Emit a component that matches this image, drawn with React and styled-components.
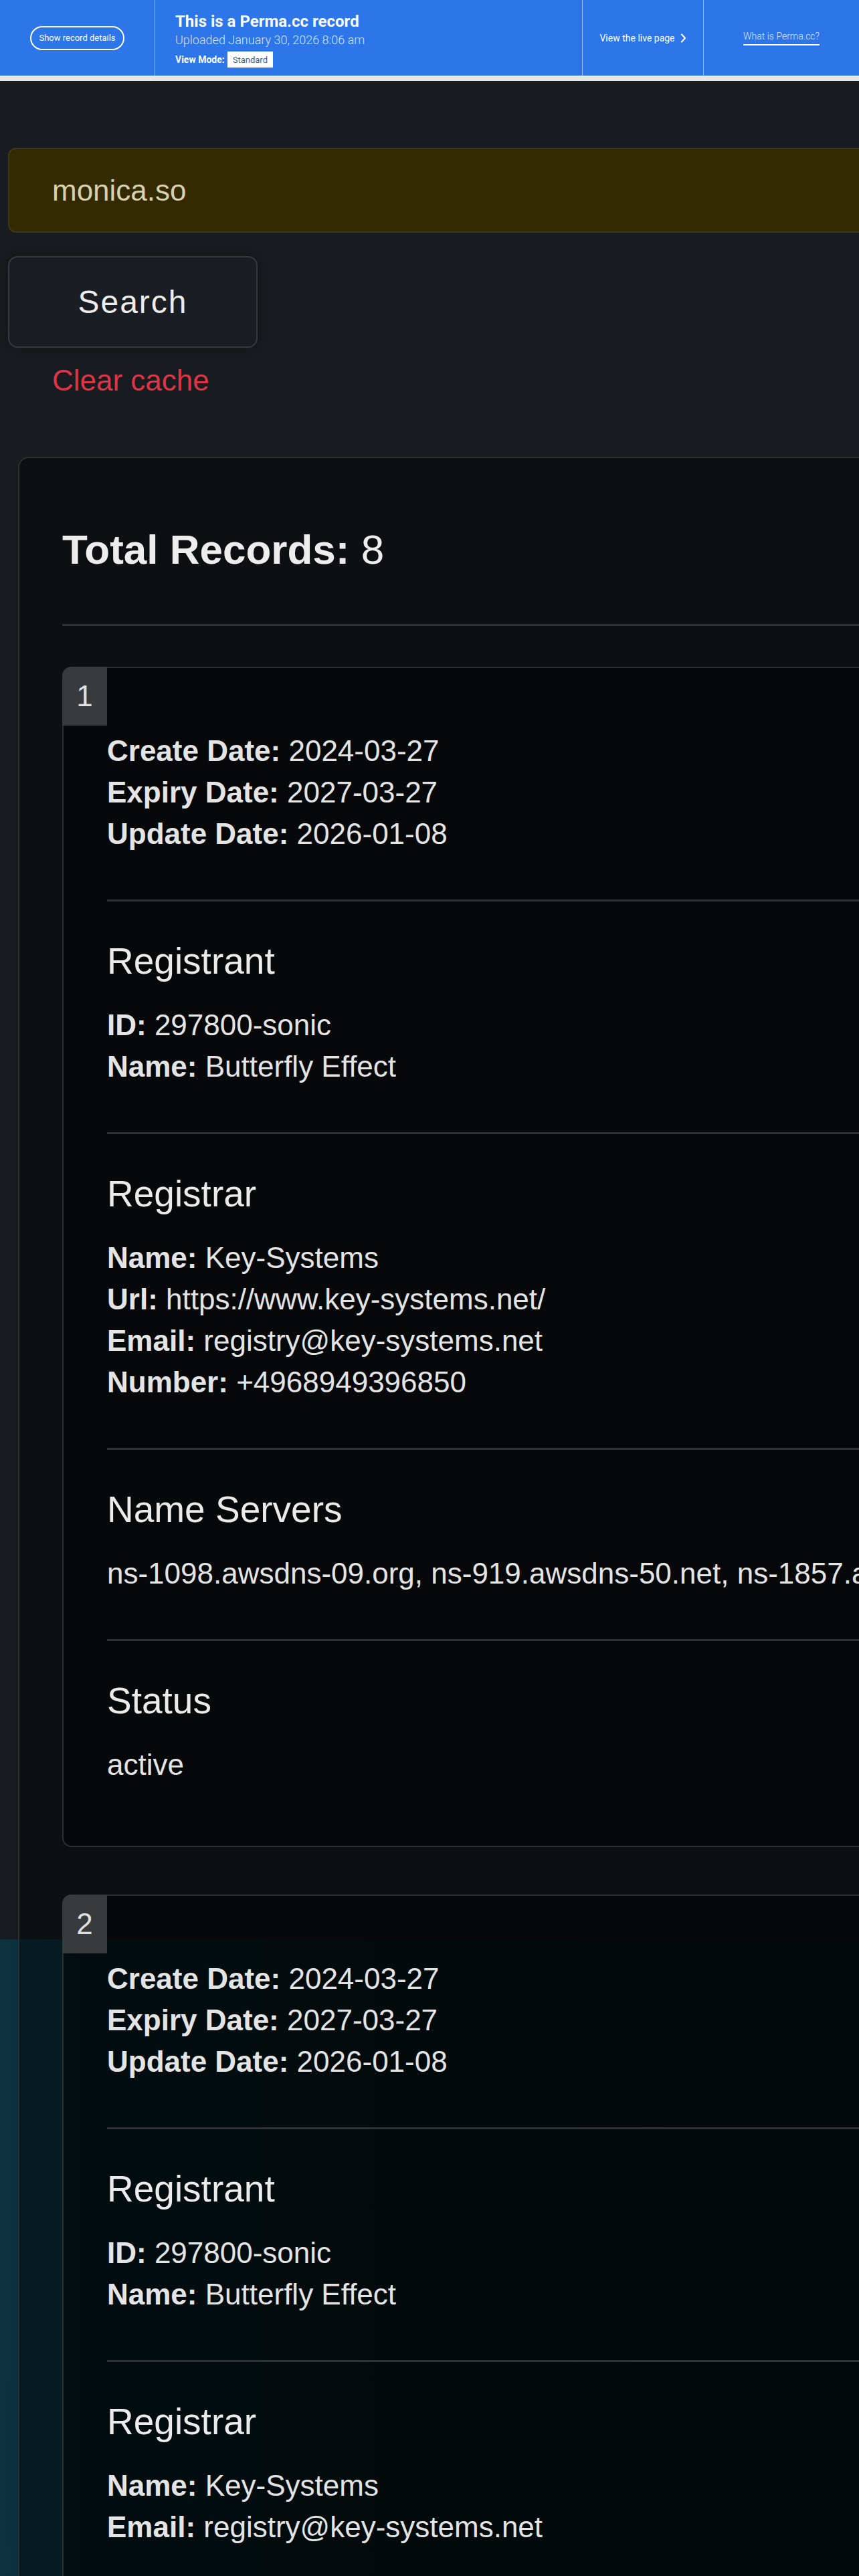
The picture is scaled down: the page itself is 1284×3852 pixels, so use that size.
import React from "react";
import styled, { createGlobalStyle } from "styled-components";

const GlobalStyle = createGlobalStyle`
  html, body {
    margin: 0;
    padding: 0;
    overflow: hidden;
    background: #181b1f;
  }
  * { box-sizing: border-box; }
`;

const Page = styled.div`
  width: 100%;
  height: 3852px;
  overflow: hidden;
  font-family: "Liberation Sans", Arial, sans-serif;
  background:
    linear-gradient(#181b1f, #181b1f) top left / 100% 2900px no-repeat,
    linear-gradient(90deg, #0d3140 0%, #0c2b35 12%, #0c2226 45%, #0d1f22 100%);
`;

/* ---------- Perma.cc banner ---------- */
const Banner = styled.header`
  display: flex;
  width: 100%;
  height: 121px;
  background: #2c76e9;
  border-bottom: 8px solid #e6e6e6;
  font-family: Roboto, "Liberation Sans", sans-serif;
  color: #ffffff;
`;

const BannerCell = styled.div`
  display: flex;
  flex-direction: ${(p) => (p.$column ? "column" : "row")};
  align-items: ${(p) => (p.$column ? "flex-start" : "center")};
  justify-content: ${(p) => (p.$column ? "flex-start" : "center")};
  width: ${(p) => p.$width || "auto"};
  flex: ${(p) => (p.$grow ? "1 1 auto" : "0 0 auto")};
  padding: ${(p) => p.$pad || "0"};
  border-right: ${(p) => (p.$divider ? "1px solid rgba(255,255,255,0.5)" : "none")};
`;

const DetailsButton = styled.button`
  height: 36px;
  padding: 0 11px;
  border: 2px solid #ffffff;
  border-radius: 18px;
  background: transparent;
  color: #ffffff;
  font-family: Roboto, sans-serif;
  font-size: 13px;
  white-space: nowrap;
`;

const BannerTitle = styled.div`
  font-size: 24px;
  font-weight: 700;
  line-height: 28px;
  white-space: nowrap;
`;

const BannerSub = styled.div`
  margin-top: 3px;
  font-size: 18px;
  font-weight: 300;
  line-height: 22px;
  color: rgba(255, 255, 255, 0.82);
  white-space: nowrap;
`;

const ModeRow = styled.div`
  display: flex;
  align-items: center;
  gap: 4px;
  margin-top: 6px;
  font-size: 14px;
  font-weight: 700;
`;

const ModeTag = styled.span`
  display: inline-flex;
  align-items: center;
  height: 24px;
  padding: 0 8px;
  background: #ffffff;
  color: #3d5f93;
  font-size: 13px;
  font-weight: 400;
`;

const LiveLink = styled.a`
  display: flex;
  align-items: center;
  gap: 8px;
  color: #ffffff;
  font-size: 14px;
  text-decoration: none;
  white-space: nowrap;
`;

const AboutLink = styled.a`
  padding-bottom: 4px;
  border-bottom: 2px solid #ffffff;
  color: rgba(255, 255, 255, 0.85);
  font-size: 14px;
  font-weight: 300;
  text-decoration: none;
  white-space: nowrap;
`;

/* ---------- Search area ---------- */
const Main = styled.main`
  width: 1600px;
  padding: 100px 0 0 12px;
`;

const DomainInput = styled.input`
  display: block;
  width: 1560px;
  height: 127px;
  padding: 0 0 0 64px;
  border: 2px solid #3c381f;
  border-radius: 12px;
  background: #332a00;
  color: #d8d0ae;
  font-family: "Liberation Sans", Arial, sans-serif;
  font-size: 44px;
  outline: none;
`;

const SearchButton = styled.button`
  display: block;
  width: 373px;
  height: 137px;
  margin-top: 35px;
  border: 2px solid #363a3f;
  border-radius: 14px;
  background: #1a1d21;
  box-shadow: 0 0 24px rgba(0, 0, 0, 0.25);
  color: #ececec;
  font-family: "Liberation Sans", Arial, sans-serif;
  font-size: 48px;
  letter-spacing: 2px;
`;

const ClearLink = styled.a`
  display: block;
  margin: 18px 0 0 66px;
  color: #dc3545;
  font-size: 44px;
  line-height: 62px;
  text-decoration: none;
`;

/* ---------- Results ---------- */
const ResultsCard = styled.section`
  width: 1560px;
  margin: 83px 0 0 15px;
  padding: 100px 0 0 64px;
  border: 2px solid #2c3034;
  border-radius: 16px;
  background: rgba(0, 0, 0, 0.42);
`;

const TotalTitle = styled.h2`
  margin: 0;
  color: #ededed;
  font-size: 62px;
  font-weight: 400;
  line-height: 74px;
  strong { font-weight: 700; }
`;

const Rule = styled.hr`
  margin: 74px 0 61px;
  height: 3px;
  border: none;
  background: #2f3337;
`;

const RecordCard = styled.article`
  margin-bottom: 71px;
  padding-bottom: 23px;
  border: 2px solid #2c3034;
  border-radius: 14px;
  background: rgba(0, 0, 0, 0.45);
`;

const IndexBadge = styled.div`
  display: flex;
  align-items: center;
  justify-content: center;
  width: 67px;
  height: 88px;
  margin: -2px 0 0 -2px;
  border-top-left-radius: 14px;
  background: #373b3e;
  color: #e0e0e0;
  font-size: 44px;
`;

const RecordBody = styled.div`
  padding-left: 65px;
`;

const Section = styled.div`
  padding: ${(p) => (p.$first ? "7px 0 67px" : "56px 0 67px")};
  border-top: ${(p) => (p.$first ? "none" : "3px solid #2f3337")};
`;

const SectionTitle = styled.h3`
  margin: 0 0 32px;
  color: #ebebeb;
  font-size: 55px;
  font-weight: 400;
  line-height: 66px;
`;

const Line = styled.div`
  color: #e4e4e4;
  font-size: 44px;
  line-height: 62px;
  white-space: nowrap;
  strong { font-weight: 700; }
`;

const Chevron = () => (
  <svg width="9" height="14" viewBox="0 0 9 14" fill="none">
    <polyline points="2,1.5 7,7 2,12.5" stroke="#ffffff" strokeWidth="2.2" strokeLinecap="round" strokeLinejoin="round" />
  </svg>
);

const records = [
  {
    id: 1,
    dates: [
      ["Create Date", "2024-03-27"],
      ["Expiry Date", "2027-03-27"],
      ["Update Date", "2026-01-08"],
    ],
    sections: [
      { title: "Registrant", rows: [["ID", "297800-sonic"], ["Name", "Butterfly Effect"]] },
      {
        title: "Registrar",
        rows: [
          ["Name", "Key-Systems"],
          ["Url", "https://www.key-systems.net/"],
          ["Email", "registry@key-systems.net"],
          ["Number", "+4968949396850"],
        ],
      },
      { title: "Name Servers", text: "ns-1098.awsdns-09.org, ns-919.awsdns-50.net, ns-1857.awsdns-40.co.uk, ns-205.awsdns-25.com" },
      { title: "Status", text: "active" },
    ],
  },
  {
    id: 2,
    dates: [
      ["Create Date", "2024-03-27"],
      ["Expiry Date", "2027-03-27"],
      ["Update Date", "2026-01-08"],
    ],
    sections: [
      { title: "Registrant", rows: [["ID", "297800-sonic"], ["Name", "Butterfly Effect"]] },
      {
        title: "Registrar",
        rows: [
          ["Name", "Key-Systems"],
          ["Email", "registry@key-systems.net"],
        ],
      },
      { title: "Name Servers", text: "ns-1098.awsdns-09.org, ns-919.awsdns-50.net, ns-1857.awsdns-40.co.uk, ns-205.awsdns-25.com" },
      { title: "Status", text: "active" },
    ],
  },
];

const Field = ({ label, value }) => (
  <Line>
    <strong>{label}:</strong> {value}
  </Line>
);

export default function App() {
  return (
    <>
      <GlobalStyle />
      <Page>
        <Banner>
          <BannerCell $width="232px" $divider>
            <DetailsButton>Show record details</DetailsButton>
          </BannerCell>
          <BannerCell $grow $column $divider $pad="18px 0 0 30px">
            <BannerTitle>This is a Perma.cc record</BannerTitle>
            <BannerSub>Uploaded January 30, 2026 8:06 am</BannerSub>
            <ModeRow>
              View Mode: <ModeTag>Standard</ModeTag>
            </ModeRow>
          </BannerCell>
          <BannerCell $width="181px" $divider>
            <LiveLink href="#">
              View the live page <Chevron />
            </LiveLink>
          </BannerCell>
          <BannerCell $width="232px">
            <AboutLink href="#">What is Perma.cc?</AboutLink>
          </BannerCell>
        </Banner>

        <Main>
          <DomainInput defaultValue="monica.so" readOnly />
          <SearchButton>Search</SearchButton>
          <ClearLink href="#">Clear cache</ClearLink>

          <ResultsCard>
            <TotalTitle>
              <strong>Total Records:</strong> 8
            </TotalTitle>
            <Rule />
            {records.map((r) => (
              <RecordCard key={r.id}>
                <IndexBadge>{r.id}</IndexBadge>
                <RecordBody>
                  <Section $first>
                    {r.dates.map(([l, v]) => (
                      <Field key={l} label={l} value={v} />
                    ))}
                  </Section>
                  {r.sections.map((s) => (
                    <Section key={s.title}>
                      <SectionTitle>{s.title}</SectionTitle>
                      {s.rows
                        ? s.rows.map(([l, v]) => <Field key={l} label={l} value={v} />)
                        : <Line>{s.text}</Line>}
                    </Section>
                  ))}
                </RecordBody>
              </RecordCard>
            ))}
          </ResultsCard>
        </Main>
      </Page>
    </>
  );
}
